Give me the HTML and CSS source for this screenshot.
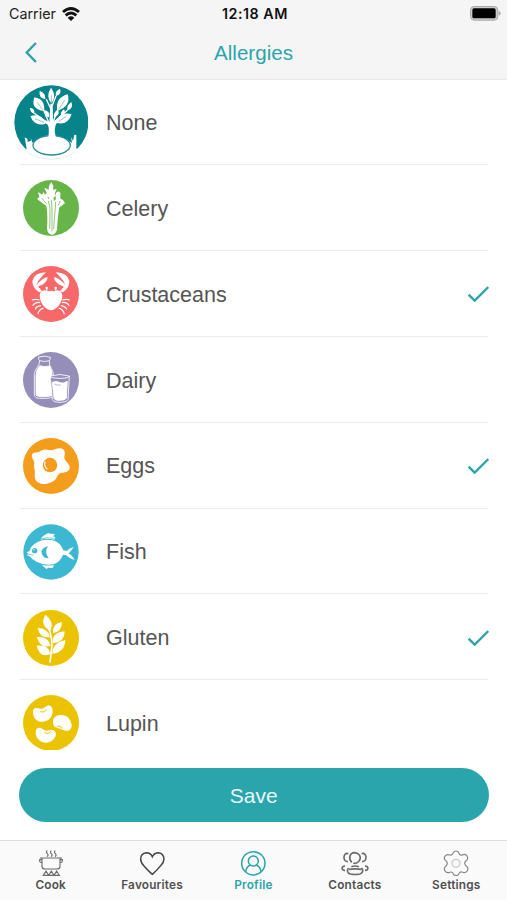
FILE: index.html
```html
<!DOCTYPE html>
<html lang="en">
<head>
<meta charset="utf-8">
<title>Allergies</title>
<link rel="stylesheet" href="styles.css">
</head>
<body>
<div class="app">
  <header class="header">
    <div class="status">
      <div class="carrier"><span>Carrier</span>
        <svg class="wifi" viewBox="0 0 54 42"><g fill="none" stroke="#111" stroke-width="8.500"><path d="M3 15Q27-6 51 15M11 25Q27 11 43 25"/></g><path fill="#111" d="M17 32Q27 24 37 32L27 42Z"/></svg>
      </div>
      <span class="time">12:18 AM</span>
      <svg class="battery" viewBox="0 0 93 44"><rect x="1.500" y="1.500" width="82" height="41" rx="11" fill="#ccc" stroke="#aaa" stroke-width="3"/><rect x="7" y="7" width="70" height="30" rx="5" fill="#000"/><path d="M86 15Q92 17 92 22T86 29Z" fill="#aaa"/></svg>
    </div>
    <div class="nav">
      <svg class="back" viewBox="0 0 36 64"><path d="M33 3L5 32L33 61" fill="none" stroke="#2ba5ac" stroke-width="7.500"/></svg>
      <h1>Allergies</h1>
    </div>
  </header>

  <main class="list">
    <div class="row">
      <div class="pic"><svg class="large" viewBox="42 14 224 224">
        <circle cx="154" cy="126" r="111" fill="#07838a"/>
        <path fill="#fff" d="M42 201L80 206 74 171l8 4 1 10 10-4-1-9 5 15 19-12Q154 153 191 175l25 12-3-16 6 10 4-18 6 1v41H266V238H42Z"/>
        <path d="M84 217Q116 235 154 236T226 215" fill="none" stroke="#d3e9e9" stroke-width="2"/>
        <ellipse cx="155" cy="195" rx="56" ry="29" fill="#fff" stroke="#2b8f94" stroke-width="4"/>
        <g fill="#fff">
          <path d="M145 171Q149 140 142 132L122 120 125 114 148 126 151 70H158L159 125Q169 116 187 111L190 118Q166 125 166 138Q162 153 168 172Z"/>
          <path d="M154 69Q136 47 153 22Q172 47 154 69ZM136 57Q115 53 119 32Q138 38 136 57ZM168 47Q163 34 180 25Q187 41 168 47ZM132 92Q91 88 103 51Q137 57 132 92ZM172 92Q164 53 203 42Q214 77 172 92ZM103 101Q90 96 90 82Q106 84 103 101ZM202 91Q199 74 214 65Q222 83 202 91ZM137 130Q104 141 91 107Q126 97 137 130ZM170 128Q174 92 215 101Q204 136 170 128ZM147 111Q131 109 134 89Q151 93 147 111ZM162 111Q158 97 174 88Q182 104 162 111ZM183 105Q180 96 192 87Q200 98 183 105Z"/>
        </g>
        <g fill="none" stroke="#fff" stroke-width="4"><path d="M130 87L148 131M174 86L158 128M103 99L147 132M202 90L159 128M139 57L153 87M168 47L155 80"/></g>
        <g fill="none" stroke="#278a90" stroke-width="1.500"><path d="M112 66L128 88M194 60L176 87M154 45V68M105 115L132 126M199 108L176 123"/></g>
      </svg></div>
      <div class="cell"><span>None</span></div>
    </div>
    <div class="row">
      <div class="pic"><svg viewBox="69 29 168 168">
        <circle cx="153" cy="113" r="84" fill="#67b548"/>
        <path fill="#fff" d="M139 106Q126 100 120 93L111 86 118 80 114 65 127 73 130 65 138 77 141 72 143 82 145 86 148 82 134 74 140 68 133 52 146 58 147 46 154 35 160 47 159 58 170 56 164 70 167 76 160 83 163 91 167 88 167 70Q173 58 181 67L181 85 188 88 195 98 185 106 178 111 174 137 171 178Q166 194 153 193 142 190 141 174Q144 136 139 106Z"/>
        <path fill="none" stroke="#67b548" stroke-width="2.200" d="M145 92Q152 110 150 137L149 175M154 90Q157 115 156 145V183M167 94Q166 121 163 145L161 176M126 84L139 100M181 92L174 105"/>
      </svg></div>
      <div class="cell"><span>Celery</span></div>
    </div>
    <div class="row">
      <div class="pic"><svg viewBox="69 288 168 168">
        <circle cx="153" cy="372" r="84" fill="#f76868"/>
        <path fill="#fff" d="M118 367Q97 355 97 333 101 309 138 307 129 316 122 324 112 334 109 345 132 320 143 322 141 340 120 347 110 350 120 355 121 361 127 364ZM188 367Q209 355 208 333 204 309 167 307 176 316 183 324 193 334 196 345 173 320 162 322 164 340 185 347 195 350 187 355 184 361 179 364Z"/>
        <path fill="#fff" d="M119 378Q119 363 134 361L146 364Q154 360 162 364L172 361Q185 363 187 376 188 391 175 409 162 421 153 421 143 421 132 409 120 397 119 378Z"/>
        <g fill="none" stroke="#fff" stroke-width="3.500"><path d="M119 390Q107 386 96 390M120 398Q107 394 98 407M123 407Q108 409 106 418M131 414Q115 419 114 433M187 390Q199 386 209 390M186 398Q199 394 208 407M183 407Q197 409 200 418M176 414Q191 419 193 433M140 362V355M167 362V355"/></g>
        <circle cx="140" cy="354" r="4" fill="#fff"/><circle cx="167" cy="354" r="4" fill="#fff"/>
      </svg></div>
      <div class="cell"><span>Crustaceans</span><svg class="check" viewBox="0 0 63 48"><path d="M2 26L20 44L61 3" fill="none" stroke="#2ba5ac" stroke-width="7"/></svg></div>
    </div>
    <div class="row">
      <div class="pic"><svg viewBox="69 35 168 168">
        <circle cx="153" cy="119" r="84" fill="#958eb9"/>
        <g stroke="#fff" stroke-width="2.500" stroke-linejoin="round">
          <path fill="none" d="M116 50Q134 44 151 51L150 58 148 61Q147 75 154 84 161 94 160 109V164Q158 174 139 174H118Q104 174 103 162V103Q104 89 113 79 119 70 119 61L116 58ZM119 61Q134 66 148 61"/>
          <path fill="#fff" d="M119 76Q132 81 149 77 157 91 156 106V165Q148 170 129 169 112 170 108 164V106Q108 89 119 76Z"/>
          <path fill="#958eb9" d="M151 107Q179 98 208 107L204 178Q199 186 180 186 161 186 157 178Z"/>
          <path fill="none" d="M151 107Q153 114 180 114T208 107"/>
          <path fill="#fff" d="M157 126Q168 120 180 127 192 131 202 123L199 174Q194 180 181 180 165 181 162 174Z"/>
        </g>
        <path d="M163 131Q173 136 182 134" fill="none" stroke="#958eb9" stroke-width="2"/>
      </svg></div>
      <div class="cell"><span>Dairy</span></div>
    </div>
    <div class="row">
      <div class="pic"><svg viewBox="69 292 170 170">
        <circle cx="154" cy="377" r="85" fill="#f49c1c"/>
        <path fill="#fff" d="M96 348Q95 336 108 336C121 337 124 326 137 327C151 329 158 331 170 325C187 319 195 326 196 337C196 347 192 350 197 359C202 367 211 372 211 383C208 396 195 397 184 398C173 400 173 414 163 422C151 432 129 435 115 427C103 419 105 409 105 399C106 386 101 382 103 371C106 363 96 356 96 348Z"/>
        <circle cx="151" cy="374" r="22" fill="#f49c1c"/><path d="M136 364Q132 379 143 387" fill="none" stroke="#fff" stroke-width="3.500"/>
      </svg></div>
      <div class="cell"><span>Eggs</span><svg class="check" viewBox="0 0 63 48"><path d="M2 26L20 44L61 3" fill="none" stroke="#2ba5ac" stroke-width="7"/></svg></div>
    </div>
    <div class="row">
      <div class="pic"><svg viewBox="70 26 168 168">
        <circle cx="154" cy="110" r="83" fill="#3db8d2"/>
        <path fill="#fff" d="M81 111L90 107Q92 91 114 80 136 69 159 75 181 80 191 105L201 107Q210 98 222 95 216 106 207 114 218 121 225 133 211 132 200 120L190 118Q183 139 161 147 135 151 112 140 97 133 88 121L81 120 86 115ZM122 73Q128 61 145 54L166 57 160 63 167 66 164 73Q143 68 122 73ZM126 148Q145 153 163 149L159 158 146 157 140 161Z"/>
        <circle cx="105" cy="106" r="8" fill="#3db8d2"/><path d="M145 93Q133 109 147 129L135 127Q125 117 125 109 129 96 145 93Z" fill="#3db8d2"/>
        <path d="M81 115L101 120M123 71Q143 64 164 69" fill="none" stroke="#3db8d2" stroke-width="2"/><circle cx="103" cy="103" r="2" fill="#fff"/>
      </svg></div>
      <div class="cell"><span>Fish</span></div>
    </div>
    <div class="row">
      <div class="pic"><svg viewBox="69 283 168 168">
        <circle cx="153" cy="367" r="84" fill="#ecc300"/>
        <path fill="#fff" d="M151 345Q118 329 136 297 165 318 151 345ZM150 364Q119 369 113 337 143 337 150 364ZM159 352Q156 323 186 319 185 350 159 352ZM151 390Q121 400 110 364 146 361 151 390ZM158 382Q155 351 194 347 193 382 158 382ZM151 415Q120 430 110 390 148 387 151 415ZM157 415Q156 382 196 373 195 409 157 415Z"/>
        <path d="M145 333Q160 376 154 405L150 441" stroke="#fff" stroke-width="5" fill="none"/>
      </svg></div>
      <div class="cell"><span>Gluten</span><svg class="check" viewBox="0 0 63 48"><path d="M2 26L20 44L61 3" fill="none" stroke="#2ba5ac" stroke-width="7"/></svg></div>
    </div>
    <div class="row">
      <div class="pic"><svg viewBox="69 30 168 168">
        <circle cx="153" cy="114" r="84" fill="#ecc300"/>
        <path fill="#fff" d="M99 77C102 67 112 69 120 71C134 74 135 62 147 61C157 63 161 77 156 90C151 105 136 112 121 110C106 107 97 93 99 77ZM159 109C160 96 170 90 182 90C200 89 212 102 215 119C216 132 207 138 197 137C186 136 183 130 173 130C163 127 158 120 159 109ZM108 135C111 127 121 126 128 132C138 141 145 135 155 135C165 135 169 142 167 152C163 165 149 173 136 173C120 172 107 158 107 144Z"/>
        <path d="M121 80Q134 85 141 74M170 126Q181 119 187 131M133 142Q145 150 152 139" fill="none" stroke="#ecc300" stroke-width="3"/>
      </svg></div>
      <div class="cell"><span>Lupin</span></div>
    </div>
  </main>

  <div class="actions"><button class="save">Save</button></div>

  <nav class="tabs">
    <a class="tab"><svg viewBox="0 0 78 78" fill="none" stroke="#6c6c6c" stroke-width="3.500"><path d="M28 2Q23 7 28 11T27 20M40 2Q35 7 40 11T39 20M52 2Q47 7 52 11T51 20M6 24H72M12 25V50Q13 57 21 57H57Q65 57 66 50V25M12 29H5V34Q6 38 12 38M66 29H73V34Q72 38 66 38M16 76L24 63 32 76ZM32 76L40 63 48 76ZM48 76L56 63 64 76Z"/></svg><span>Cook</span></a>
    <a class="tab"><svg viewBox="0 0 78 78" fill="none" stroke="#444" stroke-width="4.500"><path d="M40 73Q27 62 15 48 5 38 5 27 5 10 22 8 35 8 40 20 46 8 59 8 74 10 75 27 75 37 65 47 55 60 40 73Z"/></svg><span>Favourites</span></a>
    <a class="tab active"><svg viewBox="0 0 78 78" fill="none" stroke="#2ba5ac" stroke-width="4.500"><circle cx="40" cy="40" r="35"/><circle cx="40" cy="33" r="15"/><path d="M17 66Q18 51 31 45M63 66Q62 51 49 45"/></svg><span>Profile</span></a>
    <a class="tab"><svg class="wide" viewBox="262 45 84 78" fill="none" stroke="#6c6c6c" stroke-width="5"><path d="M294 82C284 71 287 54 303 53C317 54 324 66 317 77C312 86 305 86 299 84M284 56C275 53 270 61 271 69C272 76 276 80 283 80M324 56C333 53 338 61 337 69C336 76 332 80 325 80M274 93C262 94 263 106 274 106M334 93C346 94 345 106 334 106M293 95Q304 91 316 95M285 99C279 105 280 114 290 117Q305 120 319 117C330 113 329 104 323 99M286 103Q304 100 323 103"/></svg><span>Contacts</span></a>
    <a class="tab"><svg viewBox="0 0 78 78" fill="none" stroke="#858585" stroke-width="3.500"><path d="M31 8Q34 3 39 3 46 3 48 10 50 17 58 15 66 11 71 17 77 25 71 31 65 35 65 40 65 45 72 50 78 57 71 65 66 70 57 66 50 65 48 71 46 77 39 77 32 76 30 70 27 64 20 67 12 70 7 64 1 56 7 50 13 46 13 40 13 34 6 30 1 23 8 16 13 12 20 15 28 17 31 8Z"/><circle cx="39" cy="40" r="12" stroke="#c4c4c4"/></svg><span>Settings</span></a>
  </nav>
</div>
</body>
</html>
```
FILE: styles.css
```css
* { box-sizing: border-box; }
body { margin: 0; background: #fff; font-family: "Liberation Sans", sans-serif; }
.app { height: 900px; display: flex; flex-direction: column; overflow: hidden; }
.header { height: 79.600px; flex: none; background: #f5f5f5; border-bottom: 1.500px solid #e8e8e8; }
.status { display: grid; grid-template-columns: 1fr auto 1fr; align-items: center; height: 27px; padding: 0 6px 0 9px; font: 14.300px/27px Inter, sans-serif; color: #222; }
.carrier { display: flex; align-items: center; gap: 6px; }
.wifi { width: 18px; height: 14px; }
.time { font-weight: 600; color: #111; letter-spacing: .5px; }
.battery { width: 31px; height: 14.700px; justify-self: end; }
.nav { display: grid; grid-template-columns: 1fr auto 1fr; align-items: center; height: 51px; padding: 0 25px; }
.back { width: 12px; height: 21px; }
.nav h1 { margin: 1px 0 0; font-size: 20.600px; line-height: 28px; font-weight: 400; color: #2ba5ac; }
.list { height: 670.400px; flex: none; overflow: hidden; }
.row { height: 85.850px; display: flex; gap: 18px; padding: 0 18px 0 14px; background: linear-gradient(#ebebeb, #ebebeb) 20px 100% / 468.500px 1.300px no-repeat; }
.pic { width: 74px; display: flex; align-items: center; justify-content: center; flex: none; }
.pic svg { width: 56px; height: 56px; flex: none; }
.pic .large { width: 74.700px; height: 74.700px; }
.cell { flex: 1; display: flex; align-items: center; justify-content: space-between; font-size: 21.500px; color: #555; }
.cell span { padding-top: 2px; }
.check { width: 21px; height: 16px; }
.actions { flex: none; height: 90px; padding: 18px 18.500px 0 19px; }
.save { display: block; width: 100%; height: 54px; padding: 2px 0 0; border: 0; border-radius: 27px; background: #2ba5ac; color: #e9f8f8; font: 21px "Liberation Sans", sans-serif; }
.tabs { flex: 1; display: grid; grid-template-columns: repeat(5, 1fr); background: #fafafa; border-top: 1px solid #ddd; }
.tab { display: flex; flex-direction: column; align-items: center; padding-top: 9px; font: 600 11.800px/18px Inter, sans-serif; letter-spacing: .2px; color: #505050; }
.tab svg { width: 26px; height: 26px; }
.tab .wide { width: 28px; }
.tab.active { color: #2ba5ac; }
```
